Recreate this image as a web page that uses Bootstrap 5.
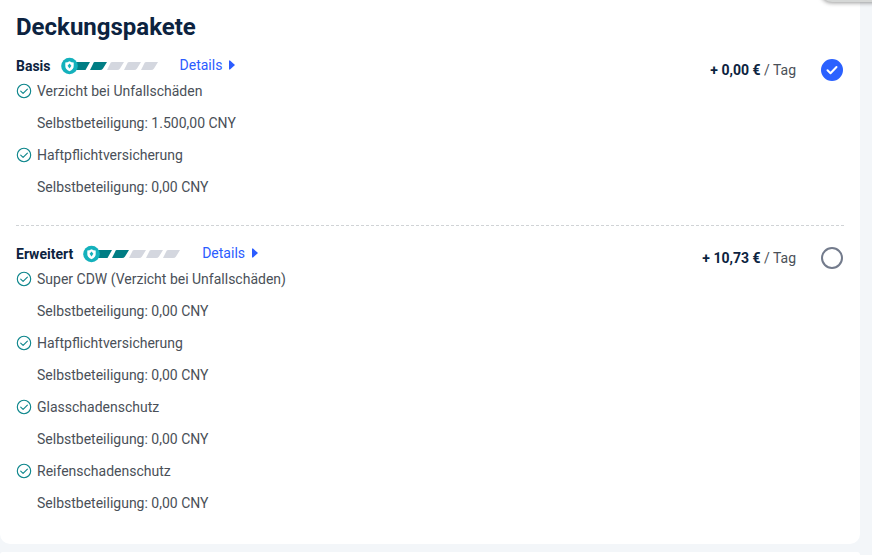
<!DOCTYPE html>
<html lang="de">
<head>
<meta charset="utf-8">
<meta name="viewport" content="width=device-width, initial-scale=1">
<title>Deckungspakete</title>
<link href="https://cdn.jsdelivr.net/npm/bootstrap@5.3.0/dist/css/bootstrap.min.css" rel="stylesheet">
<style>
body{background:#f3f6f9;font-family:Roboto,"Liberation Sans",sans-serif;font-size:14px;line-height:20px;color:#4a5058}
.page{padding-right:12px;gap:8px}
.panel{background:#fff;border-radius:0 0 10px 10px;padding:11px 16px 25px}
.panel-next{background:#fff;border-radius:10px 10px 0 0;height:3px}
.title{font-size:24px;line-height:32px;font-weight:700;margin-bottom:12px}
.title,.strong{color:#0c2340}
.strong{font-weight:700}
.package + .package{border-top:1px dashed #d0d3d6;margin-top:22px;padding-top:17px}
.package-head{height:20px}
.package-name{font-size:14px;line-height:20px;padding-top:2px}
.rating{margin-left:10px;margin-right:21px;margin-top:2px}
.details{color:#2b5cff;gap:7px}
.item{height:32px;gap:5px}
.item-note{padding-left:21px}
.price{gap:25px;padding:4px 1px 0 0}
.choice.form-check-input{width:22px;height:22px;border:2px solid #737b8c;margin:0;background-color:#fff}
.choice.form-check-input:checked{background-color:#2b61ff;border-color:#2b61ff;background-size:22px 22px;background-position:center;background-image:url("data:image/svg+xml,%3Csvg xmlns='http://www.w3.org/2000/svg' viewBox='0 0 22 22'%3E%3Cpath d='M6.5 11.3l3 3 6-6.300' fill='none' stroke='white' stroke-width='2' stroke-linecap='round' stroke-linejoin='round'/%3E%3C/svg%3E")}
.edge-clip{top:0;right:0;width:72px;height:16px}
.floating-edge{width:68px;height:24px;top:-22px;right:-16px;border-radius:12px;background:#d5d7d6;box-shadow:0 1px 4px #0006}
</style>
<script src="https://cdn.jsdelivr.net/npm/bootstrap@5.3.0/dist/js/bootstrap.bundle.min.js"></script>
</head>
<body>
<svg class="d-none" aria-hidden="true">
  <symbol id="shield-rating" viewBox="0 0 98 18">
    <path d="M15 5h14l-4.500 8H15z" fill="#007d84"/>
    <path d="M33.500 5H46l-4 6.500Q41 13 39 13H29l3-6Q32.500 5 33.500 5z" fill="#007d84"/>
    <g fill="#d4d7df"><path id="seg" d="M51 5H63l-4 6.500Q58 13 56 13H46l3-6Q49.500 5 51 5z"/><use href="#seg" x="17"/><use href="#seg" x="34"/></g>
    <circle cx="8.500" cy="9" r="8.300" fill="#14b1bc"/>
    <path d="M8.500 4.300Q10.500 5.500 12.700 5.600V9q0 3.500-4.200 5.200Q4.300 12.500 4.300 9V5.600Q6.500 5.500 8.500 4.300z" fill="#fff"/>
    <path d="M8.500 6.500l1.900 2.300-1.900 2.600-1.900-2.600z" fill="#14b1bc"/>
  </symbol>
  <symbol id="included" viewBox="0 0 16 16"><g fill="none" stroke="#0b858b" stroke-width="1.100" stroke-linecap="round" stroke-linejoin="round"><circle cx="8" cy="8" r="6.700"/><path d="M4.700 8.100l2.400 2.300 4.300-4.300"/></g></symbol>
  <symbol id="arrow" viewBox="0 0 6 10"><path d="M0 .5h1L6 5 1 9.500H0z" fill="#2b5cff"/></symbol>
</svg>
<div class="page d-flex flex-column">
  <main class="panel">
    <h1 class="title">Deckungspakete</h1>
    <section class="package d-flex justify-content-between align-items-start">
      <div>
        <div class="package-head d-flex align-items-center">
          <h2 class="package-name strong mb-0">Basis</h2>
          <svg class="rating" width="98" height="18" role="img" aria-label="2 von 5"><use href="#shield-rating"/></svg>
          <a class="details d-flex align-items-center text-decoration-none" href="#">Details <svg width="6" height="10" aria-hidden="true"><use href="#arrow"/></svg></a>
        </div>
        <ul class="list-unstyled mb-0">
          <li><div class="item d-flex align-items-center"><svg width="16" height="16"><use href="#included"/></svg>Verzicht bei Unfallschäden</div><div class="item item-note d-flex align-items-center">Selbstbeteiligung: 1.500,00 CNY</div></li>
          <li><div class="item d-flex align-items-center"><svg width="16" height="16"><use href="#included"/></svg>Haftpflichtversicherung</div><div class="item item-note d-flex align-items-center">Selbstbeteiligung: 0,00 CNY</div></li>
        </ul>
      </div>
      <div class="price d-flex align-items-center">
        <label for="basis"><span class="strong">+ 0,00 €</span> / Tag</label>
        <input class="choice form-check-input" type="radio" name="paket" id="basis" checked>
      </div>
    </section>
    <section class="package d-flex justify-content-between align-items-start">
      <div>
        <div class="package-head d-flex align-items-center">
          <h2 class="package-name strong mb-0">Erweitert</h2>
          <svg class="rating" width="98" height="18" role="img" aria-label="2 von 5"><use href="#shield-rating"/></svg>
          <a class="details d-flex align-items-center text-decoration-none" href="#">Details <svg width="6" height="10" aria-hidden="true"><use href="#arrow"/></svg></a>
        </div>
        <ul class="list-unstyled mb-0">
          <li><div class="item d-flex align-items-center"><svg width="16" height="16"><use href="#included"/></svg>Super CDW (Verzicht bei Unfallschäden)</div><div class="item item-note d-flex align-items-center">Selbstbeteiligung: 0,00 CNY</div></li>
          <li><div class="item d-flex align-items-center"><svg width="16" height="16"><use href="#included"/></svg>Haftpflichtversicherung</div><div class="item item-note d-flex align-items-center">Selbstbeteiligung: 0,00 CNY</div></li>
          <li><div class="item d-flex align-items-center"><svg width="16" height="16"><use href="#included"/></svg>Glasschadenschutz</div><div class="item item-note d-flex align-items-center">Selbstbeteiligung: 0,00 CNY</div></li>
          <li><div class="item d-flex align-items-center"><svg width="16" height="16"><use href="#included"/></svg>Reifenschadenschutz</div><div class="item item-note d-flex align-items-center">Selbstbeteiligung: 0,00 CNY</div></li>
        </ul>
      </div>
      <div class="price d-flex align-items-center">
        <label for="erweitert"><span class="strong">+ 10,73 €</span> / Tag</label>
        <input class="choice form-check-input" type="radio" name="paket" id="erweitert">
      </div>
    </section>
  </main>
  <div class="panel-next"></div>
</div>
<div class="edge-clip position-absolute overflow-hidden"><div class="floating-edge position-absolute"></div></div>
</body>
</html>
